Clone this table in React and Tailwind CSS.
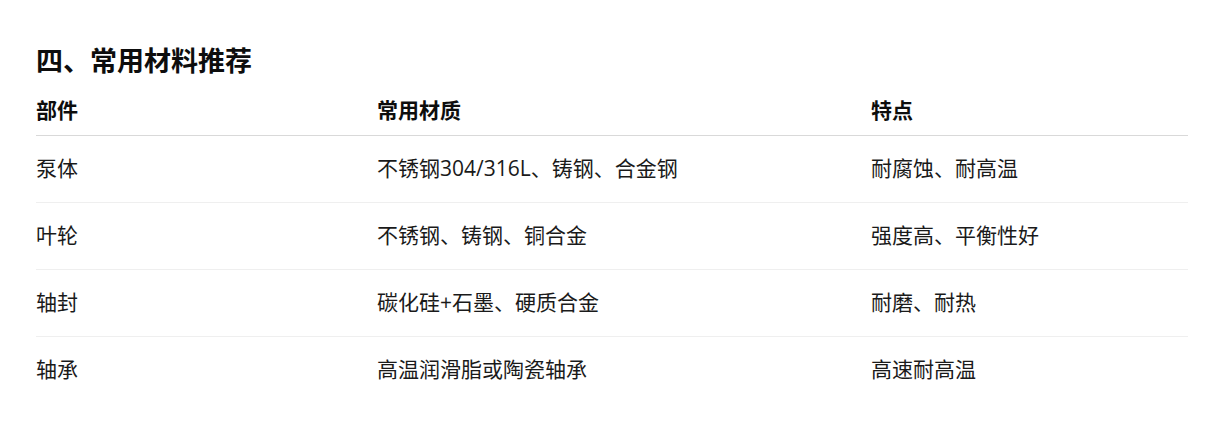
const ROWS = [
  ["泵体", "不锈钢304/316L、铸钢、合金钢", "耐腐蚀、耐高温"],
  ["叶轮", "不锈钢、铸钢、铜合金", "强度高、平衡性好"],
  ["轴封", "碳化硅+石墨、硬质合金", "耐磨、耐热"],
  ["轴承", "高温润滑脂或陶瓷轴承", "高速耐高温"],
];

export default function App() {
  return (
    <div
      className="min-h-[441px] bg-white px-[36px] pt-[44px] text-[#0d0d0d]"
      style={{ fontFamily: '"Open Sans", "Noto Sans CJK SC", sans-serif' }}
    >
      <h3 className="text-[27px] font-bold leading-[34px]">四、常用材料推荐</h3>
      <table className="mt-[9px] w-[1152px] border-collapse text-left text-[21px]">
        <thead>
          <tr className="border-b border-[#d9d9d9]">
            <th className="h-[48px] w-[341px] p-0 font-bold">部件</th>
            <th className="h-[48px] w-[494px] p-0 font-bold">常用材质</th>
            <th className="h-[48px] p-0 font-bold">特点</th>
          </tr>
        </thead>
        <tbody>
          {ROWS.map((r, i) => (
            <tr
              key={i}
              className={i < ROWS.length - 1 ? "border-b border-[#efefef]" : ""}
            >
              {r.map((c, j) => (
                <td key={j} className="h-[67px] p-0 font-normal text-[#1a1a1a]">
                  {c}
                </td>
              ))}
            </tr>
          ))}
        </tbody>
      </table>
    </div>
  );
}
